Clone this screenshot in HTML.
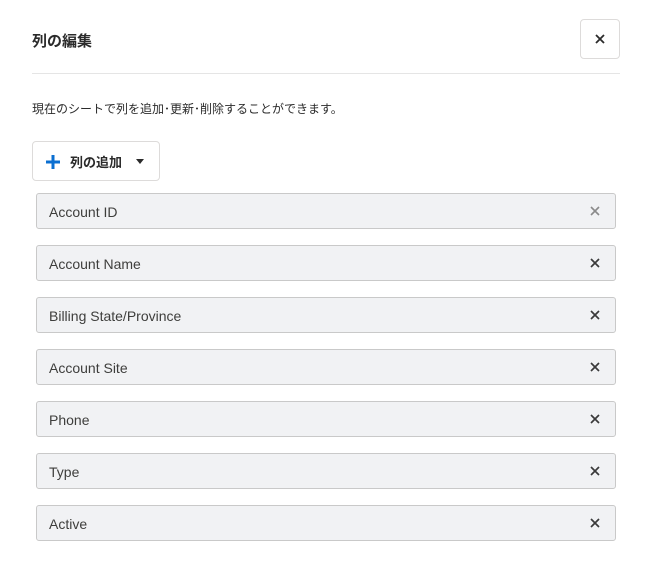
<!DOCTYPE html>
<html><head><meta charset="utf-8"><style>
*{box-sizing:border-box;margin:0;padding:0}
body{width:648px;height:571px;background:#fff;font-family:"Liberation Sans","Noto Sans CJK JP",sans-serif;color:#181818;position:relative;overflow:hidden}
.title{position:absolute;left:32px;top:30px;font-size:15px;font-weight:bold;color:#2b2b2b}
.close{position:absolute;left:580px;top:19px;width:40px;height:40px;border:1px solid #dddbda;border-radius:4px;display:flex;align-items:center;justify-content:center}
.hr{position:absolute;left:32px;top:73px;width:588px;height:1px;background:#e5e5e5}
.desc{position:absolute;left:32px;top:100px;font-size:12px;color:#2b2b2b}
.add{position:absolute;left:32px;top:141px;width:128px;height:40px;border:1px solid #dddbda;border-radius:4px;font-size:13px;font-weight:bold;color:#2b2b2b}
.add .t{position:absolute;left:37px;top:10px}
.row{position:absolute;left:36px;width:580px;height:36px;background:#f1f2f4;border:1px solid #c9c9c9;border-radius:3px;font-size:14px;color:#3e3e3c}
.row span{position:absolute;left:12px;top:10px}
.row svg{position:absolute;left:553px;top:12px}
</style></head><body>
<div class="title">列の編集</div>
<div class="close"><svg width="10" height="10" viewBox="0 0 10 10"><path d="M1 1L9 9M9 1L1 9" stroke="#2b2b2b" stroke-width="1.8"/></svg></div>
<div class="hr"></div>
<div class="desc">現在のシートで列を追加･更新･削除することができます。</div>
<div class="add"><svg style="position:absolute;left:13px;top:13px" width="14" height="14" viewBox="0 0 14 14"><path d="M7 0V14M0 7H14" stroke="#0b6fd1" stroke-width="3"/></svg><span class="t">列の追加</span><svg style="position:absolute;left:103px;top:17px" width="8" height="5" viewBox="0 0 8 5"><path d="M0 0H8L4 5Z" fill="#2b2b2b"/></svg></div>
<div class="row" style="top:193px"><span>Account ID</span><svg width="10" height="10" viewBox="0 0 10 10"><path d="M1 1L9 9M9 1L1 9" stroke="#8a8a8a" stroke-width="1.6"/></svg></div>
<div class="row" style="top:245px"><span>Account Name</span><svg width="10" height="10" viewBox="0 0 10 10"><path d="M1 1L9 9M9 1L1 9" stroke="#3a3a3a" stroke-width="1.7"/></svg></div>
<div class="row" style="top:297px"><span>Billing State/Province</span><svg width="10" height="10" viewBox="0 0 10 10"><path d="M1 1L9 9M9 1L1 9" stroke="#3a3a3a" stroke-width="1.7"/></svg></div>
<div class="row" style="top:349px"><span>Account Site</span><svg width="10" height="10" viewBox="0 0 10 10"><path d="M1 1L9 9M9 1L1 9" stroke="#3a3a3a" stroke-width="1.7"/></svg></div>
<div class="row" style="top:401px"><span>Phone</span><svg width="10" height="10" viewBox="0 0 10 10"><path d="M1 1L9 9M9 1L1 9" stroke="#3a3a3a" stroke-width="1.7"/></svg></div>
<div class="row" style="top:453px"><span>Type</span><svg width="10" height="10" viewBox="0 0 10 10"><path d="M1 1L9 9M9 1L1 9" stroke="#3a3a3a" stroke-width="1.7"/></svg></div>
<div class="row" style="top:505px"><span>Active</span><svg width="10" height="10" viewBox="0 0 10 10"><path d="M1 1L9 9M9 1L1 9" stroke="#3a3a3a" stroke-width="1.7"/></svg></div>
</body></html>
